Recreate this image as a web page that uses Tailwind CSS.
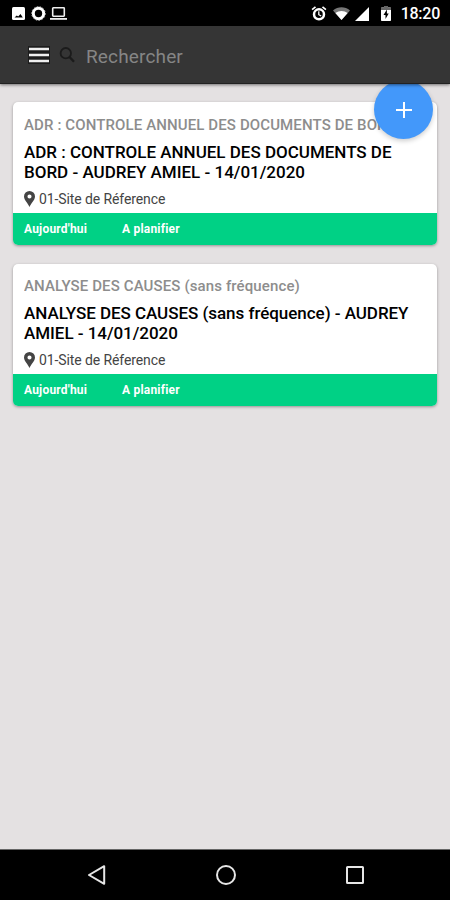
<!DOCTYPE html>
<html lang="fr">
<head>
    <meta charset="UTF-8">
    <meta name="viewport" content="width=device-width, initial-scale=1.0">
    <title>Planning</title>
    <script src="https://cdn.jsdelivr.net/npm/@tailwindcss/browser@4"></script>
</head>
<body class="bg-[#e4e1e2] font-['Roboto',sans-serif]">

    <div class="flex h-[900px] w-[450px] flex-col overflow-hidden">

        <!-- Barre d'état -->
        <div class="relative z-20 flex h-[26px] shrink-0 items-center bg-black pt-px pr-[10px] pl-3 text-white">
            <svg class="h-[13px] w-[13px]" viewBox="0 0 13 13">
                <rect width="13" height="13" rx="1.5" fill="#fff"/>
                <path d="M2.5 10.6 4.8 8.6 6.2 9.4 8.5 7 10.8 10.6Z" fill="#000"/>
            </svg>
            <svg class="ml-[6px] h-[15px] w-[15px]" viewBox="0 0 15 15">
                <circle cx="7.5" cy="7.5" r="5.2" fill="none" stroke="#fff" stroke-width="3"/>
                <circle cx="7.5" cy="7.5" r="6.8" fill="none" stroke="#ccc" stroke-dasharray="1.5 1.5"/>
            </svg>
            <svg class="ml-1 h-[13px] w-[17px]" viewBox="0 0 17 13" fill="none" stroke="#eee">
                <rect x="2.7" y=".8" width="11.6" height="8.4" rx=".6" stroke-width="1.6"/>
                <path d="M0 11.9H17" stroke-width="1.8"/>
            </svg>

            <svg class="ml-auto h-[15px] w-[16px]" viewBox="0 0 15 15" fill="none" stroke="#fff">
                <circle cx="7.5" cy="8.3" r="5" stroke-width="2.5"/>
                <path d="M.6 3.7 4 .9M14.4 3.7 11 .9" stroke-width="1.7"/>
                <path d="M7.3 5.2V8.7L9.7 10" stroke-width="1.3"/>
            </svg>
            <svg class="ml-[6px] h-[13px] w-[17px]" viewBox="0 0 17 13">
                <path d="M0 3.4C5-.8 12-.8 17 3.4L8.5 13Z" fill="#777"/>
                <path d="M2.4 6.1C6 3.4 11 3.4 14.6 6.1L8.5 13Z" fill="#fff"/>
            </svg>
            <svg class="ml-[5px] h-[14px] w-[14px]" viewBox="0 0 14 14">
                <path d="M14 0V14H0Z" fill="#fff"/>
            </svg>
            <svg class="ml-[12px] h-[15px] w-[10px]" viewBox="0 0 10 15">
                <path d="M3 0H7V1.6H9.2Q10 1.6 10 2.4V14.2Q10 15 9.2 15H.8Q0 15 0 14.2V2.4Q0 1.6.8 1.6H3Z" fill="#fff"/>
                <path d="M0 1.6H3V0H7V1.6H10V4H0Z" fill="#666"/>
                <path d="M5.9 3.5 2.5 9H4.5V13L7.7 7.4H5.9Z" fill="#000"/>
            </svg>
            <span class="ml-[10px] text-[16px] leading-none font-medium tracking-[-0.25px]">18:20</span>
        </div>

        <!-- Barre de recherche -->
        <header class="relative z-20 flex h-[58px] shrink-0 items-center border-b border-[#222] bg-[#353535] pl-7 shadow-[0_1px_3px_rgba(0,0,0,0.5)]">
            <svg class="h-[20px] w-[22px]" viewBox="0 0 22 20">
                <path d="M0 1H22V19H0Z" fill="#1c1c1c"/>
                <path d="M1 4H21M1 10H21M1 16H21" stroke="#eee" stroke-width="2.4"/>
            </svg>
            <svg class="ml-[9px] h-[17px] w-[17px]" viewBox="0 0 17 17" fill="none" stroke="#1b1b1b">
                <circle cx="6.8" cy="7.2" r="5.2" stroke-width="1.8"/>
                <path d="M10.5 11 15 15.8" stroke-width="2.4"/>
            </svg>
            <input type="text" placeholder="Rechercher" class="ml-[10px] w-64 pt-[5px] text-[19px] tracking-[0.15px] text-white outline-none placeholder:text-[#858585]">
        </header>

        <main class="relative flex grow flex-col gap-[19px] px-[13px] pt-[18px]">
            <!-- Bouton d'ajout -->
            <button class="absolute top-[-4px] right-[17px] z-10 flex h-[59px] w-[59px] items-center justify-center rounded-full bg-[#4398fa] shadow-[0_2px_5px_rgba(0,0,0,0.2)]">
                <svg class="h-4 w-4" viewBox="0 0 16 16" stroke="#fff" stroke-width="2"><path d="M8 0V16M0 8H16"/></svg>
            </button>

            <article class="flex h-[143px] flex-col overflow-hidden rounded-[5px] bg-white shadow-[0_1px_3px_rgba(0,0,0,0.35)]">
                <div class="grow px-[11px] pt-[13px]">
                    <h2 class="overflow-hidden text-[15px] leading-[20px] font-medium tracking-[0.12px] whitespace-nowrap text-[#8d8d8d]">ADR : CONTROLE ANNUEL DES DOCUMENTS DE BORD</h2>
                    <p class="mt-[7px] text-[17px] leading-[20px] font-medium tracking-[-0.01px] text-black">ADR : CONTROLE ANNUEL DES DOCUMENTS DE<br>BORD - AUDREY AMIEL - 14/01/2020</p>
                    <div class="mt-[7px] flex items-center text-[14px] leading-[20px] tracking-[-0.1px] text-[#444]">
                        <svg class="mr-[4px] h-[16px] w-[11px]" viewBox="0 0 11 16"><path d="M5.5 0A5.5 5.5 0 0 0 0 5.5C0 9 4.2 12.5 5.5 16 6.8 12.5 11 9 11 5.5A5.5 5.5 0 0 0 5.5 0ZM5.5 3.5A2 2 0 1 1 5.5 7.6 2 2 0 1 1 5.5 3.5Z" fill="#444"/></svg>
                        <span>01-Site de Réference</span>
                    </div>
                </div>
                <div class="flex h-[32px] items-center bg-[#00d185] px-[11px] text-[12px] font-bold tracking-[0.2px] text-white">
                    <span class="w-[98px]">Aujourd'hui</span>
                    <span>A planifier</span>
                </div>
            </article>

            <article class="flex h-[142px] flex-col overflow-hidden rounded-[5px] bg-white shadow-[0_1px_3px_rgba(0,0,0,0.35)]">
                <div class="grow px-[11px] pt-[12px]">
                    <h2 class="overflow-hidden text-[15px] leading-[20px] font-medium tracking-[0.12px] whitespace-nowrap text-[#8d8d8d]">ANALYSE DES CAUSES (sans fréquence)</h2>
                    <p class="mt-[7px] text-[17px] leading-[20px] font-medium tracking-[-0.04px] text-black">ANALYSE DES CAUSES (sans fréquence) - AUDREY<br>AMIEL - 14/01/2020</p>
                    <div class="mt-[7px] flex items-center text-[14px] leading-[20px] tracking-[-0.1px] text-[#444]">
                        <svg class="mr-[4px] h-[16px] w-[11px]" viewBox="0 0 11 16"><path d="M5.5 0A5.5 5.5 0 0 0 0 5.5C0 9 4.2 12.5 5.5 16 6.8 12.5 11 9 11 5.5A5.5 5.5 0 0 0 5.5 0ZM5.5 3.5A2 2 0 1 1 5.5 7.6 2 2 0 1 1 5.5 3.5Z" fill="#444"/></svg>
                        <span>01-Site de Réference</span>
                    </div>
                </div>
                <div class="flex h-[32px] items-center bg-[#00d185] px-[11px] text-[12px] font-bold tracking-[0.2px] text-white">
                    <span class="w-[98px]">Aujourd'hui</span>
                    <span>A planifier</span>
                </div>
            </article>
        </main>

        <!-- Barre de navigation Android -->
        <nav class="flex h-[51px] shrink-0 items-center gap-[110px] border-t border-[#666] bg-black pl-[87px]">
            <svg class="h-5 w-5" viewBox="0 0 20 20" fill="none" stroke="#e6e6e6" stroke-width="2" stroke-linejoin="round"><path d="M17.2 1.2V18.8L2 10Z"/></svg>
            <svg class="-ml-[1px] h-[20px] w-[20px]" viewBox="0 0 20 20" fill="none" stroke="#e6e6e6" stroke-width="2"><circle cx="10" cy="10" r="9"/></svg>
            <svg class="h-[18px] w-[18px]" viewBox="0 0 18 18" fill="none" stroke="#e6e6e6" stroke-width="2"><rect x="1" y="1" width="16" height="16" rx=".5"/></svg>
        </nav>
    </div>

</body>
</html>
